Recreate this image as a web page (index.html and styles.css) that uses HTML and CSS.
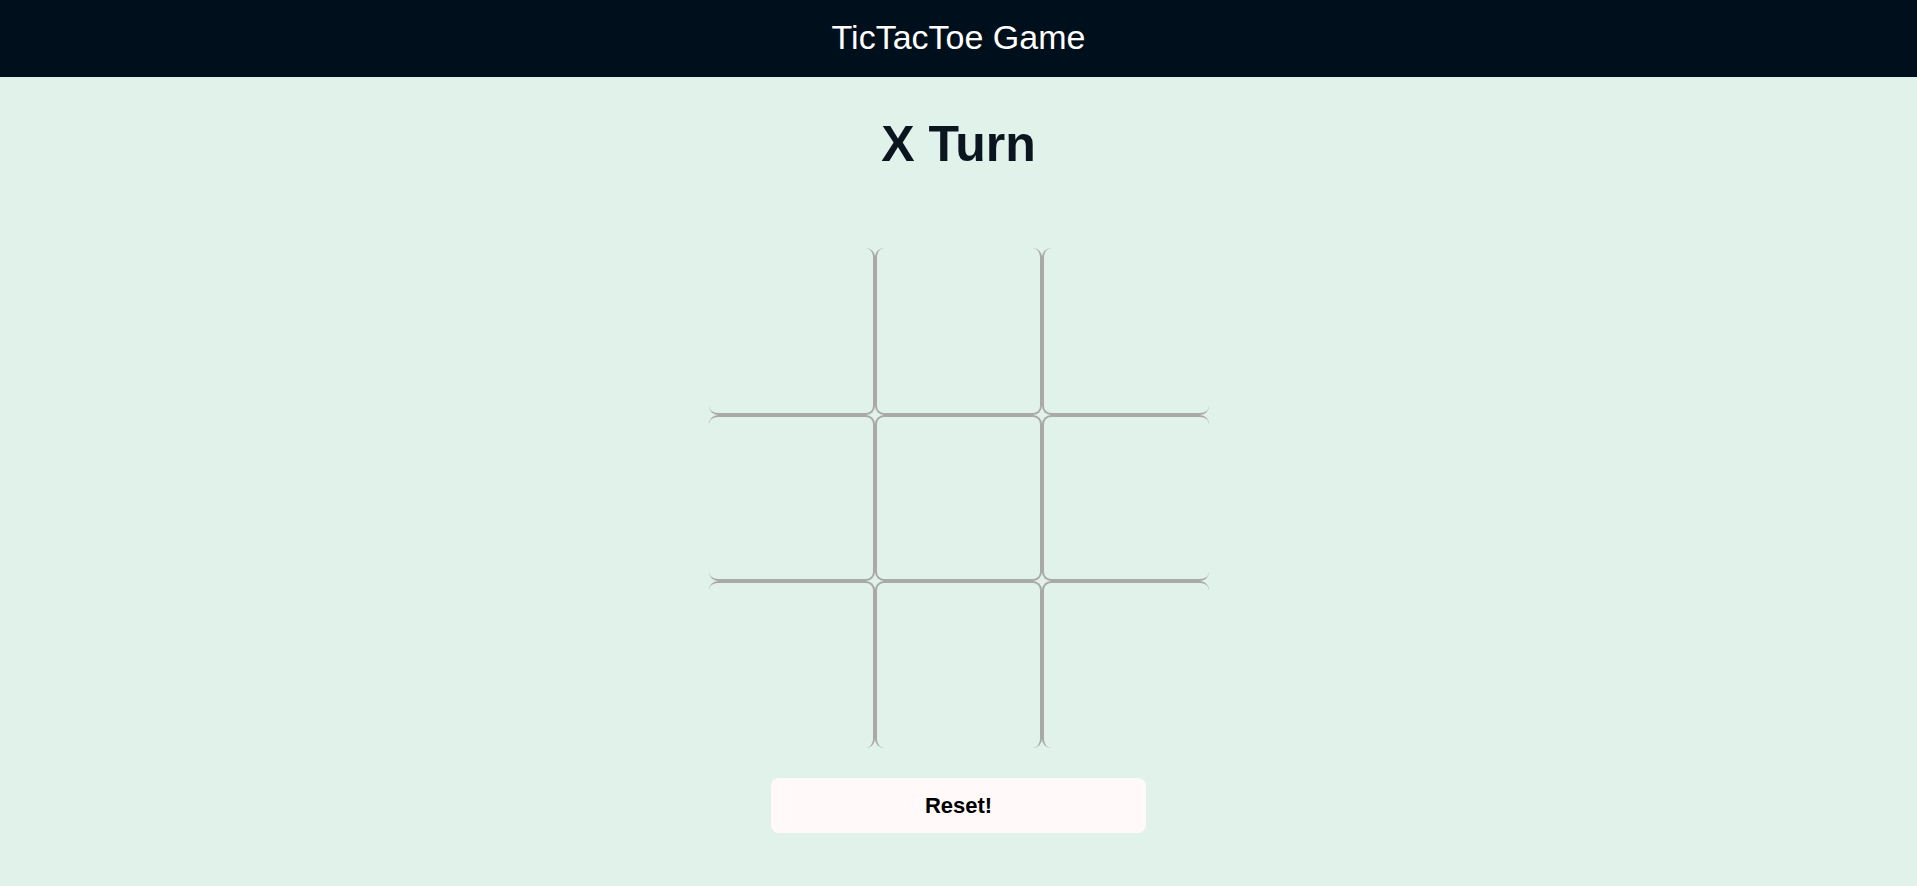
FILE: index.html
```html
<!DOCTYPE html>
<html lang="en">
<head>
<meta charset="utf-8">
<title>TicTacToe Game</title>
<link rel="stylesheet" href="styles.css">
</head>
<body>
<header class="topbar">TicTacToe Game</header>
<main class="game">
  <h1 class="turn">X Turn</h1>
  <div class="board">
    <div class="cell"></div>
    <div class="cell"></div>
    <div class="cell"></div>
    <div class="cell"></div>
    <div class="cell"></div>
    <div class="cell"></div>
    <div class="cell"></div>
    <div class="cell"></div>
    <div class="cell"></div>
  </div>
  <button class="reset">Reset!</button>
</main>
</body>
</html>
```
FILE: styles.css
```css
html, body {
  margin: 0;
  padding: 0;
}
body {
  background: #e1f2ea;
  font-family: "Liberation Sans", Arial, sans-serif;
  min-height: 886px;
}
.topbar {
  height: 77px;
  padding-bottom: 2px;
  box-sizing: border-box;
  background: #000f1c;
  color: #ffffff;
  font-size: 34px;
  display: flex;
  align-items: center;
  justify-content: center;
}
.game {
  display: flex;
  flex-direction: column;
  align-items: center;
}
.turn {
  margin: 39px 0 0 0;
  font-size: 50px;
  font-weight: 700;
  color: #0a1520;
  line-height: 56px;
}
.board {
  margin-top: 76px;
  width: 500px;
  height: 500px;
  display: grid;
  grid-template-columns: repeat(3, 1fr);
  grid-template-rows: repeat(3, 1fr);
}
.cell {
  box-sizing: border-box;
  border: 2px solid #a9a9a9;
  border-radius: 9px;
}
.cell:nth-child(-n+3) { border-top: none; }
.cell:nth-child(n+7) { border-bottom: none; }
.cell:nth-child(3n+1) { border-left: none; }
.cell:nth-child(3n) { border-right: none; }
.reset {
  margin-top: 30px;
  width: 375px;
  height: 55px;
  border: none;
  border-radius: 8px;
  background: #fffaf9;
  color: #000000;
  font-family: "Liberation Sans", Arial, sans-serif;
  font-size: 22px;
  font-weight: 700;
  cursor: pointer;
}
```
